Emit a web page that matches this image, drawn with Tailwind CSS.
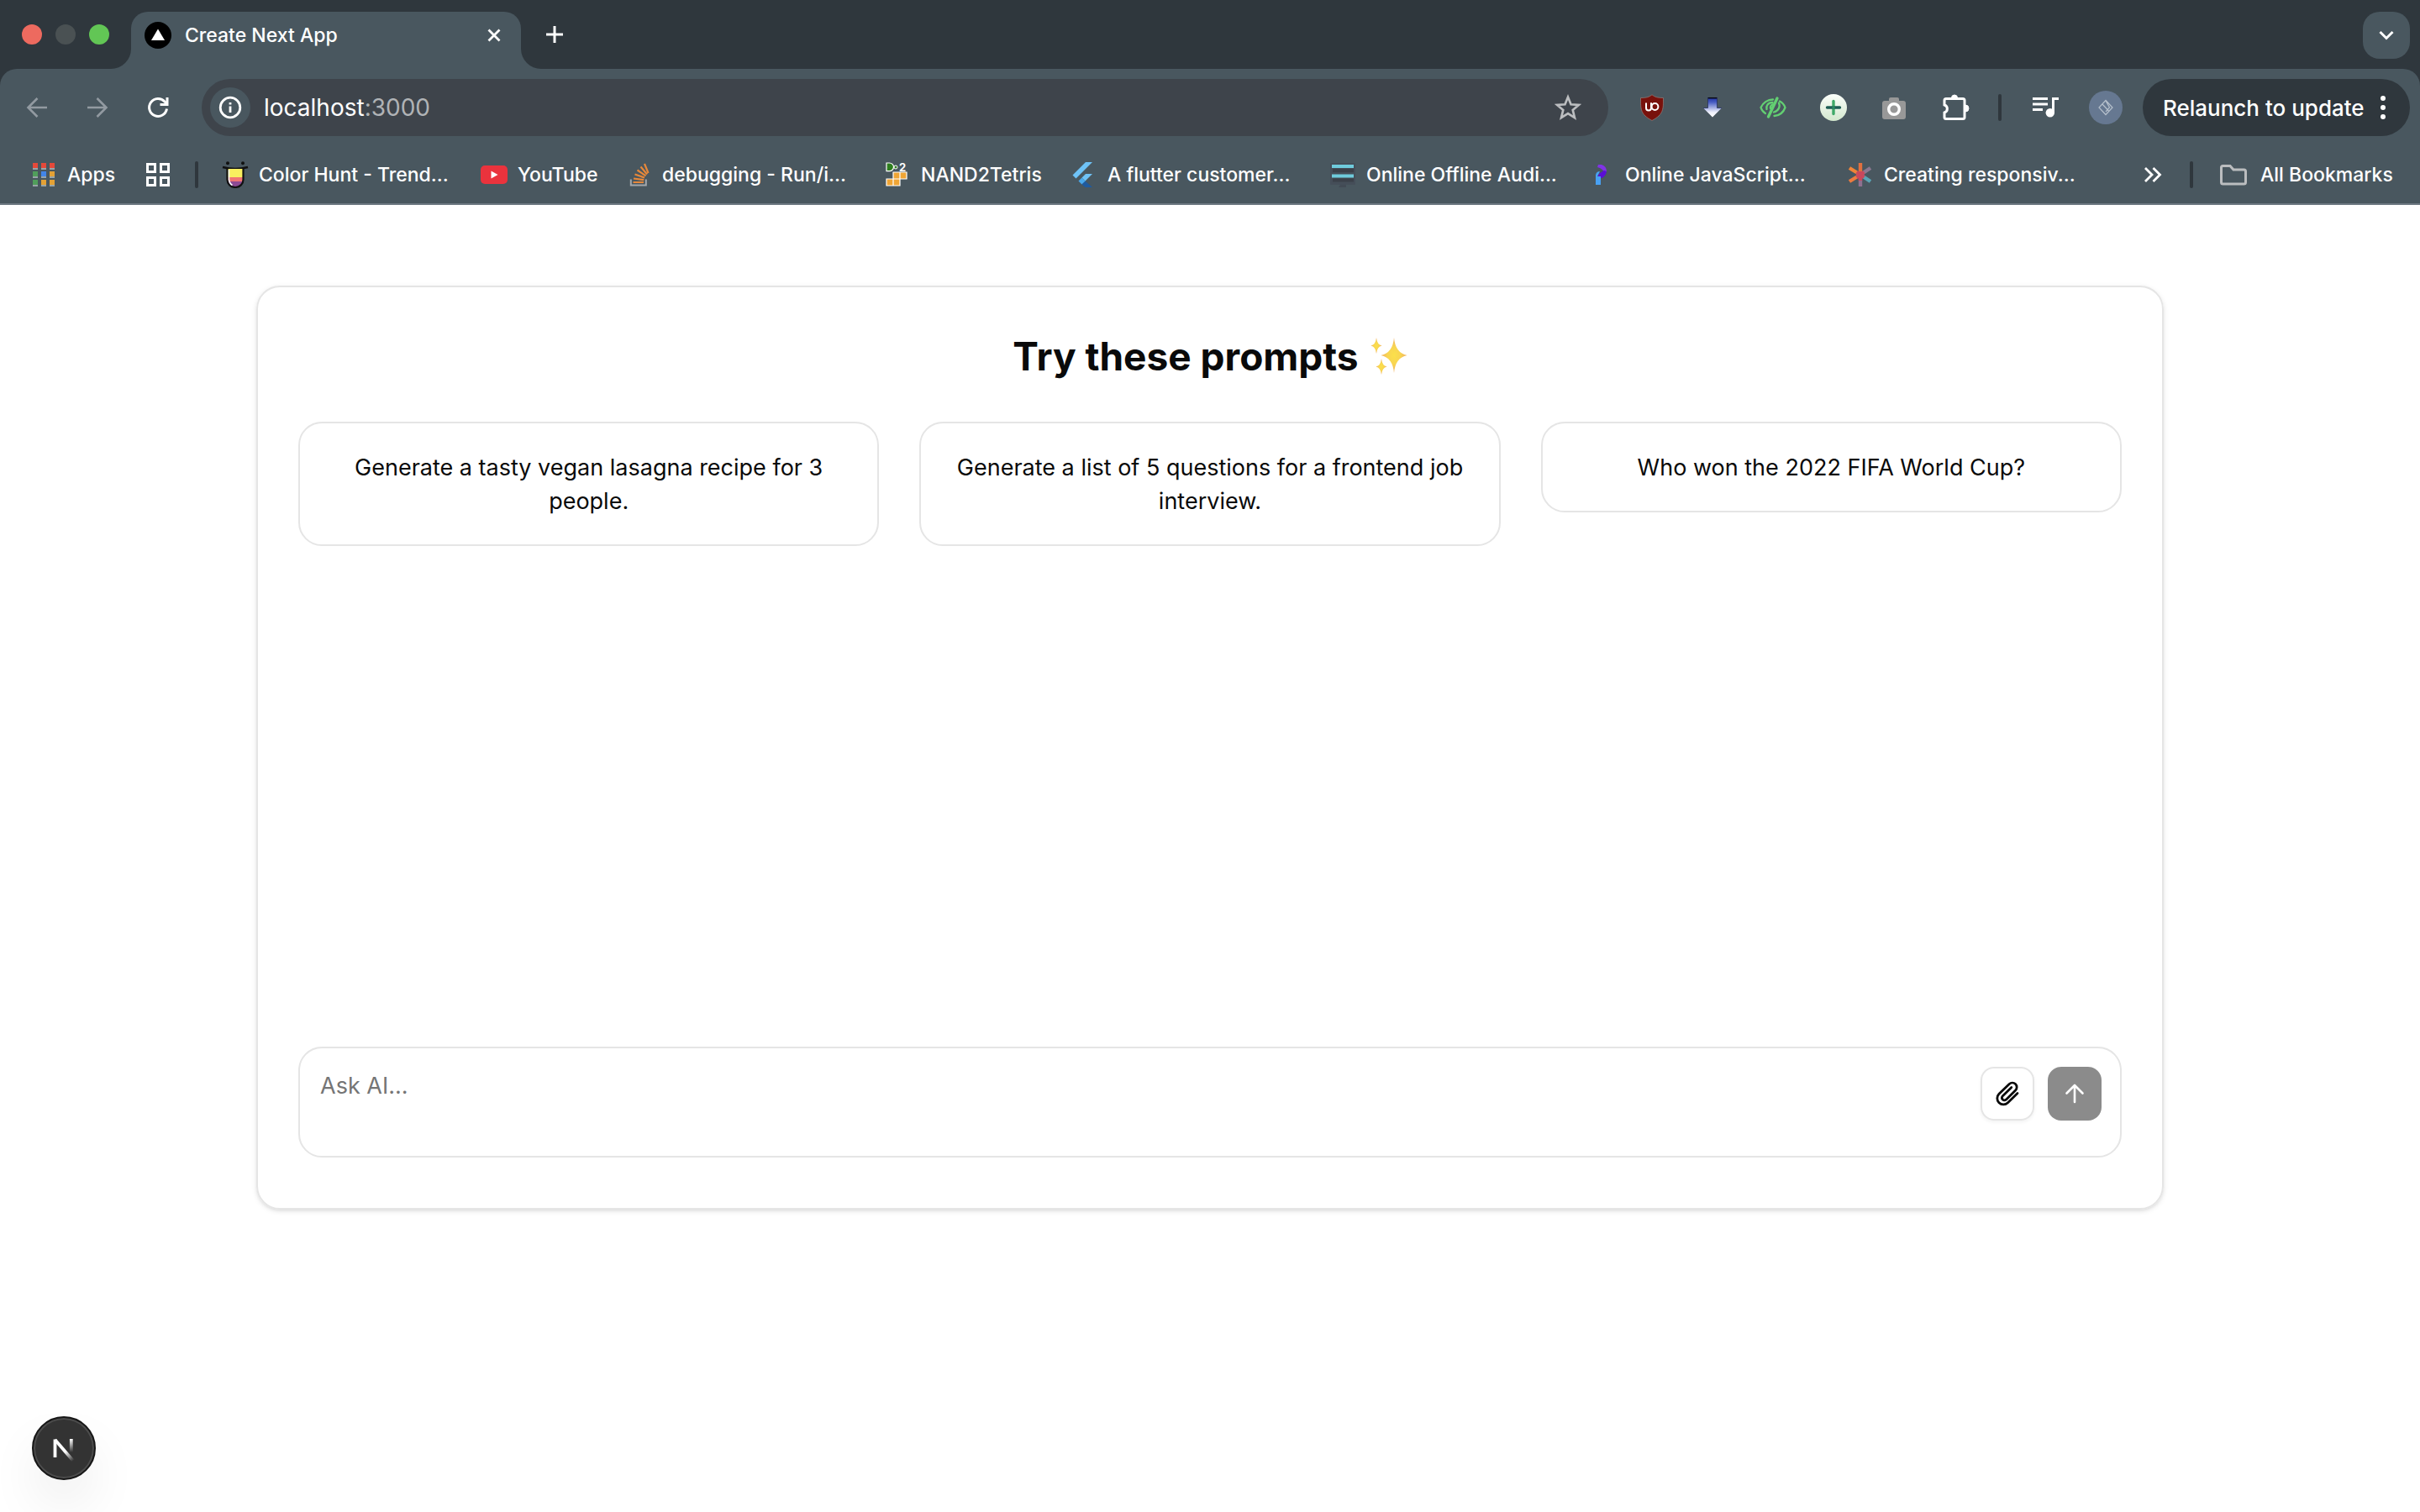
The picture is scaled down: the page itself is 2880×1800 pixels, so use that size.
<!DOCTYPE html>
<html lang="en">
<head>
<meta charset="utf-8">
<meta name="viewport" content="width=device-width, initial-scale=1">
<title>Create Next App</title>
<script src="https://cdn.jsdelivr.net/npm/@tailwindcss/browser@4"></script>
</head>
<body class="flex min-h-screen flex-col bg-white font-['Inter','Liberation_Sans',sans-serif] text-neutral-950">

<!-- Browser window -->
<header class="shrink-0 border-b-2 border-[#6d7882] bg-[#2f373d] text-white">
  <!-- Tab strip -->
  <div class="flex h-[82px] items-end">
    <div class="flex h-[82px] items-center gap-4 pl-[26px]">
      <span class="size-6 rounded-full bg-[#ed6a5f]"></span>
      <span class="size-6 rounded-full bg-[#4a5153]"></span>
      <span class="size-6 rounded-full bg-[#62c655]"></span>
    </div>
    <svg class="ml-0.5 size-6" viewBox="0 0 24 24" fill="#49575f"><path d="M24 0v24H0A24 24 0 0 0 24 0Z"/></svg>
    <div class="flex h-[68px] w-[464px] items-center rounded-t-[20px] bg-[#49575f] pr-6 pb-3 pl-4">
      <svg class="size-8" viewBox="0 0 32 32"><circle cx="16" cy="16" r="16" fill="#000"/><path d="M16 8.500 24 22H8Z" fill="#fff"/></svg>
      <span class="ml-4 text-[23px] leading-8 font-medium">Create Next App</span>
      <button class="ml-auto" aria-label="Close tab"><svg class="size-4" viewBox="0 0 16 16" fill="none" stroke="#fff" stroke-width="2.800"><path d="m1.500 1.500 13 13m0-13-13 13"/></svg></button>
    </div>
    <svg class="size-6" viewBox="0 0 24 24" fill="#49575f"><path d="M0 0v24h24A24 24 0 0 1 0 0Z"/></svg>
    <button class="ml-1.5 flex h-[82px] items-center" aria-label="New tab"><svg class="size-5" viewBox="0 0 20 20" stroke="#fff" stroke-width="3"><path d="M10 0v20M0 10h20"/></svg></button>
    <button class="mr-3 mb-3 ml-auto flex size-14 items-center justify-center rounded-[20px] bg-[#49575f]" aria-label="Search tabs"><svg class="h-3 w-5" viewBox="0 0 20 12" fill="none" stroke="#fff" stroke-width="3"><path d="m2.500 2 7.500 7.500L17.500 2"/></svg></button>
  </div>

  <div class="rounded-t-[20px] bg-[#49575f]">
    <!-- Toolbar -->
    <div class="flex h-[92px] items-center pr-3 pl-7">
      <nav class="flex items-center gap-10" aria-label="History">
        <button aria-label="Back"><svg class="size-8" viewBox="0 0 32 32" fill="none" stroke="#929aa1" stroke-width="2.600"><path d="M28 16H6M16.500 5 5.500 16l11 11"/></svg></button>
        <button aria-label="Forward"><svg class="size-8" viewBox="0 0 32 32" fill="none" stroke="#929aa1" stroke-width="2.600"><path d="M4 16h22M15.500 5l11 11-11 11"/></svg></button>
        <button aria-label="Reload"><svg class="size-8" viewBox="0 0 32 32" fill="none" stroke="#fff" stroke-width="3"><path d="M26.500 17.500A10.500 10.500 0 1 1 24 9l2.500 2.500M27 4v8.500h-8.500"/></svg></button>
      </nav>
      <div class="ml-9 flex h-[68px] min-w-0 flex-1 items-center rounded-full bg-[#3e444b] pr-8 pl-2.5">
        <button class="flex size-12 items-center justify-center rounded-full bg-[#49575f]" aria-label="View site information"><svg class="size-7" viewBox="0 0 28 28" fill="none" stroke="#fff" stroke-width="2.800"><circle cx="14" cy="14" r="11.800"/><path d="M14 12.500V20M14 8v2.600"/></svg></button>
        <a href="http://localhost:3000" class="ml-4 text-[28px] leading-10">localhost<span class="text-[#b0b3b6]">:3000</span></a>
        <button class="ml-auto" aria-label="Bookmark this tab"><svg class="size-8" viewBox="0 0 32 32" fill="none" stroke="#bcbec0" stroke-width="2.600"><path d="m16 3.500 3.500 8.700 9.300.7-7.100 6 2.300 9.200-8-5-8 5 2.300-9.200-7.100-6 9.300-.7Z"/></svg></button>
      </div>

      <!-- Extensions -->
      <div class="ml-9 flex items-center gap-10">
        <button aria-label="uBlock Origin"><svg class="size-8" viewBox="0 0 32 32"><path d="M16 .8c3.500 3 7.500 3.800 13.500 3.700 0 13.500.5 19.500-13.500 27C2 24 2.500 18 2.500 4.500 8.500 4.600 12.500 3.800 16 .8Z" fill="#78110c" stroke="#8e7774" stroke-width=".8"/><path d="M9 10.500v6a3 3 0 0 0 6 0v-6" fill="none" stroke="#fff" stroke-width="2"/><path d="M15 10.500V16" stroke="#fff" stroke-width="2"/><circle cx="19.500" cy="15" r="3.900" fill="none" stroke="#fff" stroke-width="2"/></svg></button>
        <button aria-label="Downloader"><svg class="size-8" viewBox="0 0 32 32"><defs><linearGradient id="dl" x2="0" y2="1"><stop stop-color="#1c2f9f"/><stop offset=".25" stop-color="#4a5fc4"/><stop offset=".75" stop-color="#eef0fb"/><stop offset="1" stop-color="#fff"/></linearGradient></defs><path d="M10.500 4h11v12.500H27L16 27.500 5 16.500h5.500Z" fill="url(#dl)"/><path d="M10.500 4.700h11" stroke="#0a0a14" stroke-width="1.500"/><path d="M5 16.500h5.500V5m11 0v11.500H27" fill="none" stroke="#26305f" stroke-width=".8"/></svg></button>
        <button aria-label="Hide elements"><svg class="size-8" viewBox="0 0 32 32" fill="none" stroke="#63cf72" stroke-width="2.300" stroke-linecap="round"><path d="M7 23C4.500 21.500 2.500 19 1.500 16 4 10.500 9.500 6.500 16 6.500M24 8.500c3.500 1.800 5.500 4.500 6.500 7.500-2 5.500-7 9.500-13 10"/><path d="M21 5 10.500 27" stroke-width="3.400"/><path d="M8.500 18c-1-4 1.500-8 7-8M13 17c-.5-2 .5-4 2.500-4.500M23 10.500c2 4.500-.5 9.500-6 11"/></svg></button>
        <button aria-label="Add"><svg class="size-8" viewBox="0 0 32 32"><defs><linearGradient id="ad" x2="0" y2="1"><stop stop-color="#fbfefa"/><stop offset="1" stop-color="#d3e8ce"/></linearGradient></defs><circle cx="16" cy="16" r="16" fill="url(#ad)"/><path d="M16 8.500v15" stroke="#3fa968" stroke-width="3.400" stroke-linecap="round"/><path d="M8.500 16h15" stroke="#1c5d54" stroke-width="3.400" stroke-linecap="round"/><path d="M16 14v4" stroke="#2c8560" stroke-width="3.400"/></svg></button>
        <button aria-label="Screenshot"><svg class="size-8" viewBox="0 0 32 32"><path d="M10 8V6q0-2 2-2h8q2 0 2 2v2h5q3 0 3 3v16q0 3-3 3H5q-3 0-3-3V11q0-3 3-3Z" fill="#989898"/><circle cx="16" cy="18" r="6.300" fill="#989898" stroke="#fff" stroke-width="3.400"/></svg></button>
        <button aria-label="Extensions"><svg class="size-8 overflow-visible" viewBox="0 0 32 32"><path d="M6 5.500h20q2 0 2 2v20q0 2-2 2H6q-2 0-2-2V22a4.700 4.700 0 0 0 0-9V7.500q0-2 2-2Z" fill="none" stroke="#fff" stroke-width="3"/><path d="M12.500 4.500a3.500 3.500 0 0 1 7 0ZM29 13a3.500 3.500 0 0 1 0 8Z" fill="#fff" stroke="#fff"/></svg></button>
      </div>
      <span class="ml-9 h-8 w-1 rounded-full bg-[#2f373d]"></span>
      <button class="ml-9" aria-label="Media controls"><svg class="size-8" viewBox="0 0 32 32" fill="none" stroke="#fff" stroke-width="3"><path d="M1 5.500h18M1 12h18M1 18.500h12M25.500 22V5.500H32"/><circle cx="21.800" cy="22.200" r="5.200" fill="#fff" stroke="none"/></svg></button>
      <button class="ml-9 flex size-10 items-center justify-center rounded-full bg-[#667891]" aria-label="Profile"><svg class="size-5" viewBox="0 0 20 20" fill="none" stroke="#b6c0cc" stroke-width="1.200"><path d="M10 1.500 2 10l8 8.500 8-8.500ZM6 6l8 8.500M10 2l4.500 8L10 15"/></svg></button>
      <button class="ml-6 flex h-[68px] w-[318px] items-center justify-between rounded-full bg-[#2f373d] pr-7 pl-6 text-[26px] font-medium">Relaunch to update<svg class="h-7 w-2" viewBox="0 0 8 28" fill="#fff"><circle cx="4" cy="3" r="3"/><circle cx="4" cy="14" r="3"/><circle cx="4" cy="25" r="3"/></svg></button>
    </div>

    <!-- Bookmarks bar -->
    <nav class="flex h-[68px] items-center pr-7 pl-9 text-[23px] leading-8 font-medium whitespace-nowrap" aria-label="Bookmarks">
      <a href="#" class="flex w-[136px] shrink-0 items-center gap-3"><svg class="size-8" viewBox="0 0 32 32"><path d="M3 9h6m4 0h6m4 0h6M3 19h6m4 0h6m4 0h6M3 29h6m4 0h6m4 0h6" stroke="#98a4a8" stroke-width="2"/><path d="M3 2h6v6H3zM13 2h6v6h-6zM23 2h6v6h-6z" fill="#e5493a"/><path d="M3 12h6v6H3zM3 22h6v6H3z" fill="#519e5b"/><path d="M13 12h6v6h-6z" fill="#4285e8"/><path d="M23 12h6v6h-6zM13 22h6v6h-6zM23 22h6v6h-6z" fill="#e3a135"/></svg>Apps</a>
      <a href="#" aria-label="Tab groups"><svg class="size-8" viewBox="0 0 32 32" fill="none" stroke="#fff" stroke-width="3"><path d="M3.500 3.500h9v9h-9zM19.500 3.500h9v9h-9zM3.500 19.500h9v9h-9zM19.500 19.500h9v9h-9z"/></svg></a>
      <span class="mx-7 h-8 w-1 rounded-full bg-[#2f373d]"></span>
      <a href="#" class="flex w-[308px] shrink-0 items-center gap-3"><svg class="size-8" viewBox="0 0 32 32"><circle cx="7" cy="2.200" r="2" fill="#111"/><circle cx="25" cy="2.200" r="2" fill="#111"/><path d="M1 7q15 4 30 0" fill="none" stroke="#111" stroke-width="2.600"/><path d="M7 9h18v13a9 9 0 0 1-18 0Z" fill="#8d4a93"/><path d="M7 9h18v15H7Z" fill="#ef7574"/><path d="M7 9h18v10H7Z" fill="#f9ef5f"/><path d="M6.500 9v13a9.500 9 0 0 0 19 0V9" fill="none" stroke="#111" stroke-width="2.200"/><path d="M8.500 10v12q1 5 4 6.500" fill="none" stroke="#fff" stroke-width="1.500"/></svg>Color Hunt - Trend...</a>
      <a href="#" class="flex w-[172px] shrink-0 items-center gap-3"><svg class="size-8" viewBox="0 0 32 32"><rect y="5" width="32" height="22" rx="5" fill="#ea333d"/><path d="m12.500 11.500 8 4.500-8 4.500Z" fill="#fff"/></svg>YouTube</a>
      <a href="#" class="flex w-[308px] shrink-0 items-center gap-3"><svg class="size-8" viewBox="0 0 32 32" fill="none"><path d="M6.800 21.500v7h18v-7" stroke="#a3a8ad" stroke-width="2"/><path d="M9.500 25h12.500M10 20.500l12.200 1.600M11.500 15.500l11.500 4M14.500 10.500l10 6.800M18.500 6.500l7.500 9M23 3l4.500 11" stroke="#e7883a" stroke-width="2.200"/></svg>debugging - Run/i...</a>
      <a href="#" class="flex w-[222px] shrink-0 items-center gap-3"><svg class="size-8" viewBox="0 0 32 32"><path d="M3 2h3.500a5 4.800 0 0 1 0 9.600H3Z" fill="#2d7d1e" stroke="#fff" stroke-width="1.200"/><circle cx="14" cy="7" r="2" fill="#2d7d1e" stroke="#fff"/><text x="18" y="12" font-family="Inter" font-weight="700" font-size="13" fill="#fff">2</text><path d="M11 13h8v8h-8zM19 13h8v8h-8zM3 21h8v8H3zM11 21h8v8h-8z" fill="#efa535" stroke="#fff" stroke-width="1.200"/></svg>NAND2Tetris</a>
      <a href="#" class="flex w-[308px] shrink-0 items-center gap-3"><svg class="size-8" viewBox="0 0 32 32"><path d="M18 1h8L6.500 20.500l-4-4Z" fill="#6fc3f7"/><path d="M18 15h8l-8.500 8.500-4-4Z" fill="#6fc3f7"/><path d="m9.500 23.500 4-4 4.500 4.500-4.500 3.500Z" fill="#4aa9ec"/><path d="m13.500 27.500 4-4L26 31h-8.500Z" fill="#1f5a9e"/></svg>A flutter customer...</a>
      <a href="#" class="flex w-[308px] shrink-0 items-center gap-3"><svg class="size-8" viewBox="0 0 32 32"><rect x="1" y="2" width="30" height="26" rx="1" fill="#454e59"/><path d="M13 28h7v3h-9Z" fill="#424b55"/><path d="M4 11h25M4 22.500h25" stroke="#3b4049" stroke-width="4"/><path d="M3 6h26M3 17.500h26" stroke="#6fcbdc" stroke-width="4"/></svg>Online Offline Audi...</a>
      <a href="#" class="flex w-[308px] shrink-0 items-center gap-3"><svg class="size-8" viewBox="0 0 32 32"><path d="M12 4h4q6 2 6 8l-3 3q0-6-8-8Z" fill="#8133e6"/><path d="M19 11l3 1q-1 6-6 8h-5q1-6 8-9Z" fill="#5a0fd6"/><path d="M9 16q1-4 5-4l-3 6h4v10H9Z" fill="#48a1f3"/></svg>Online JavaScript...</a>
      <a href="#" class="flex w-[308px] shrink-0 items-center gap-3"><svg class="size-8" viewBox="0 0 32 32" fill="none" stroke-width="4.400"><path d="M16 16 28 24" stroke="#5aa3b4"/><path d="M16 16 28 8" stroke="#8c7891"/><path d="M16 16v14" stroke="#8f7090"/><path d="M16 16 3 24" stroke="#ec7b3f"/><path d="M16 16 3 8" stroke="#f08438"/><path d="M16 2v14" stroke="#e2703f"/><path d="m11.500 13 9 6m0-6-9 6M16 12v11" stroke="#c9485c"/></svg>Creating responsiv...</a>
      <div class="ml-auto flex shrink-0 items-center">
        <button aria-label="More bookmarks"><svg class="h-5 w-6" viewBox="0 0 24 20" fill="none" stroke="#fff" stroke-width="2.800"><path d="m3 2 8 8-8 8M12.500 2l8 8-8 8"/></svg></button>
        <span class="mx-8 h-8 w-1 rounded-full bg-[#2f373d]"></span>
        <a href="#" class="flex w-[210px] items-center gap-4"><svg class="size-8" viewBox="0 0 32 32" fill="none" stroke="#bbbdbf" stroke-width="3"><path d="M3.500 5.500h8.500l4 4.500h12.500q2 0 2 2v13q0 2-2 2h-25q-2 0-2-2v-17.500q0-2 2-2Z"/></svg>All Bookmarks</a>
      </div>
    </nav>
  </div>
</header>

<!-- Chat page -->
<main class="flex-1 px-12 pt-24">
  <section class="mx-auto flex min-h-[1100px] w-full max-w-[2270px] flex-col rounded-[28px] border-2 border-neutral-200 px-12 pt-[50px] pb-15 shadow-[0_2px_6px_rgba(0,0,0,0.1),0_2px_4px_-2px_rgba(0,0,0,0.1)]">
    <h1 class="flex h-16 items-center justify-center gap-3.5 text-[46px] font-bold">Try these prompts
      <svg class="size-11" viewBox="0 0 44 44" role="img" aria-label="Sparkles"><defs><radialGradient id="sp"><stop stop-color="#fbe04a"/><stop offset=".5" stop-color="#f8d552"/><stop offset="1" stop-color="#f0ae62"/></radialGradient></defs><g fill="url(#sp)"><path d="M28 0q1.500 18 15.500 21Q29.500 24 28 42q-1.500-18-15.500-21Q26.500 18 28 0Z"/><path d="M7 0q1 8.500 6.500 9.500Q8 10.500 7 19 6 10.500.5 9.500 6 8.500 7 0Z"/><path d="M13 25q1 8.500 6.500 9.500Q14 35.500 13 44q-1-8.500-6.500-9.500Q12 33.500 13 25Z"/></g></svg>
    </h1>
    <div class="mt-[46px] grid grid-cols-3 items-start gap-12 text-[27px] leading-10">
      <button class="rounded-[28px] border-2 border-neutral-200 px-8 pt-[33px] pb-[31px]">Generate a tasty vegan lasagna recipe for 3 people.</button>
      <button class="rounded-[28px] border-2 border-neutral-200 px-8 pt-[33px] pb-[31px]">Generate a list of 5 questions for a frontend job interview.</button>
      <button class="rounded-[28px] border-2 border-neutral-200 px-8 pt-[33px] pb-[31px]">Who won the 2022 FIFA World Cup?</button>
    </div>
    <form class="mt-auto flex h-[132px] items-start gap-4 rounded-[28px] border-2 border-neutral-200 py-[22px] pr-[22px] pl-6">
      <textarea aria-label="Ask AI" placeholder="Ask AI..." class="h-full min-w-0 flex-1 resize-none pt-[3px] text-[27px] leading-10 outline-none placeholder:text-[#757575]"></textarea>
      <button type="button" class="flex size-16 items-center justify-center rounded-2xl border-2 border-neutral-200 shadow-[0_2px_4px_rgba(0,0,0,0.05)]" aria-label="Attach file"><svg class="size-8" viewBox="0 0 32 32" fill="none" stroke="#0a0a0a" stroke-width="2.800" stroke-linecap="round" stroke-linejoin="round"><path d="M28 15.500 16.500 26.800A7.400 7.400 0 0 1 6 16.300L18.200 4.600a5.200 5.200 0 0 1 7.400 7.400L14.300 23.200a3 3 0 0 1-4.200-4.200L20.800 8.400"/></svg></button>
      <button type="submit" class="flex size-16 items-center justify-center rounded-2xl bg-[#8b8b8b]" aria-label="Send"><svg class="size-7" viewBox="0 0 28 28" fill="none" stroke="#fff" stroke-width="2.600" stroke-linecap="round" stroke-linejoin="round"><path d="M14 24V4M4.500 13.500 14 4l9.500 9.500"/></svg></button>
    </form>
  </section>
</main>

<button class="fixed bottom-[38px] left-[38px] flex size-[76px] items-center justify-center rounded-full border-2 border-[#171717] bg-[#333] shadow-[inset_0_0_0_2px_#4c4c4c,0_32px_64px_-8px_rgba(0,0,0,0.1)]" aria-label="Open Next.js Dev Tools">
  <svg class="size-8" viewBox="0 0 32 32" fill="none" stroke-width="3.800"><defs><linearGradient id="n1" gradientUnits="userSpaceOnUse" x1="18" y1="20" x2="27" y2="31"><stop stop-color="#fff"/><stop offset="1" stop-color="#fff" stop-opacity="0"/></linearGradient><linearGradient id="n2" gradientUnits="userSpaceOnUse" x1="0" y1="5" x2="0" y2="21"><stop stop-color="#fff"/><stop offset="1" stop-color="#fff" stop-opacity="0"/></linearGradient></defs><path d="M5.500 27V5.500" stroke="#fff"/><path d="M5.500 6 27 31" stroke="url(#n1)"/><path d="M24.800 5v16" stroke="url(#n2)"/></svg>
</button>
</body>
</html>
